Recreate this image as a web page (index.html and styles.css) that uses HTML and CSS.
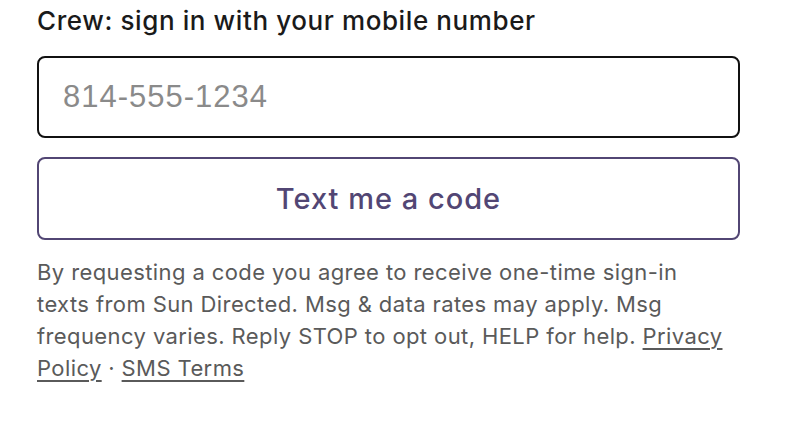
FILE: index.html
```html
<!DOCTYPE html>
<html>
<head>
<meta charset="utf-8">
<link rel="stylesheet" href="styles.css">
</head>
<body>
<main class="signin">
  <h1 class="title">Crew: sign in with your mobile number</h1>
  <input class="phone" type="tel" placeholder="814-555-1234">
  <button class="send">Text me a code</button>
  <p class="legal">By requesting a code you agree to receive one-time sign-in texts from Sun Directed. Msg &amp; data rates may apply. Msg frequency varies. Reply STOP to opt out, HELP for help. <a href="#">Privacy Policy</a> · <a href="#">SMS Terms</a></p>
</main>
</body>
</html>
```
FILE: styles.css
```css
html, body { margin: 0; padding: 0; background: #fff; }
body { font-family: Inter, "Noto Sans", sans-serif; }
.signin {
  width: 703px;
  padding: 4px 0 0 37px;
  display: flex;
  flex-direction: column;
}
.title {
  margin: 0 0 18px 0;
  font-size: 26px;
  font-weight: 500;
  color: #1a1a1a;
  line-height: 34px;
  letter-spacing: 0.6px;
}
.phone {
  box-sizing: border-box;
  height: 82px;
  border: 2px solid #111;
  border-radius: 8px;
  padding: 0 24px;
  font-family: "Liberation Sans", Arial, sans-serif;
  font-size: 31px;
  letter-spacing: 1px;
  color: #222;
  outline: none;
}
.phone::placeholder { color: #8a8a8a; }
.send {
  box-sizing: border-box;
  margin-top: 19px;
  height: 83px;
  border: 2px solid #524674;
  border-radius: 8px;
  background: #fff;
  color: #524674;
  font-family: Inter, "Noto Sans", sans-serif;
  font-size: 29px;
  font-weight: 500;
  letter-spacing: 1px;
}
.legal {
  margin: 16px 0 0 0;
  max-width: 690px;
  font-size: 22px;
  line-height: 32px;
  color: #5a5a5a;
  letter-spacing: 0.4px;
}
.legal a { color: #5a5a5a; text-decoration: underline; text-underline-offset: 4px; }
```
